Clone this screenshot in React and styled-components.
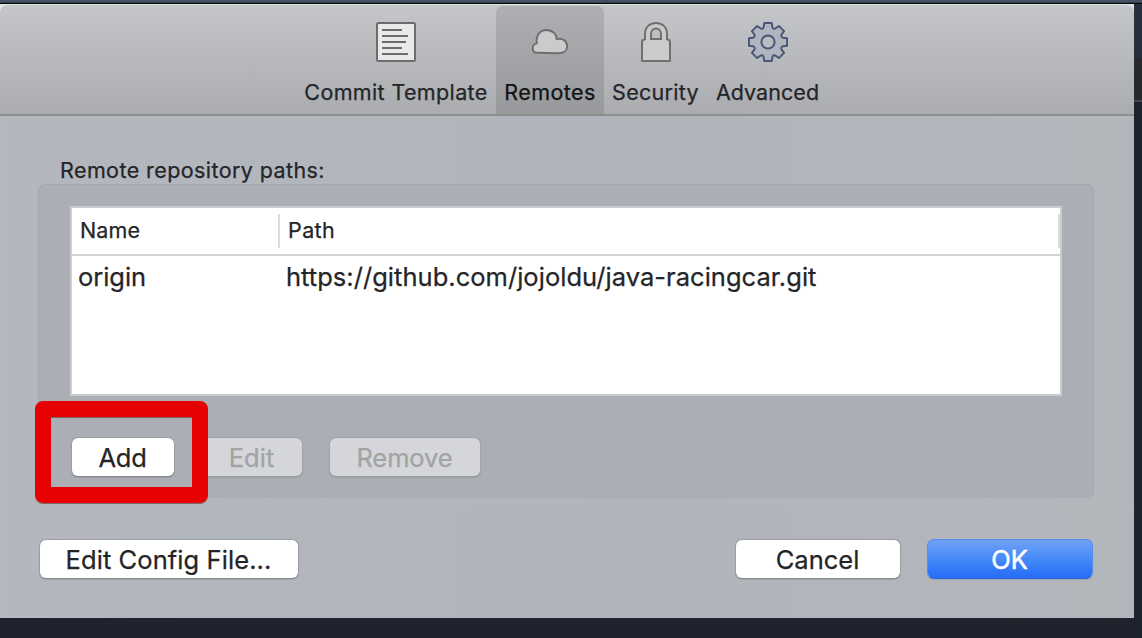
import React from "react";
import styled, { createGlobalStyle, css } from "styled-components";

const Global = createGlobalStyle`
  * { box-sizing: border-box; }
  html, body { margin: 0; padding: 0; }
  body { overflow: hidden; font-family: Inter, "Liberation Sans", sans-serif; color: #242528; }
  button { font-family: inherit; margin: 0; }
`;

const Desktop = styled.div`
  position: relative;
  width: 1142px;
  height: 638px;
  padding-top: 4px;
  background:
    linear-gradient(to bottom, #465263 0 2px, #35404f 2px 3px, #06080b 3px 4px, transparent 4px),
    linear-gradient(to bottom, #27303d 0 58px, #26292d 58px 100px, #44474b 100px 102px, #1c222e 102px) right / 8px 100% no-repeat,
    #1e232e;
`;

const Dialog = styled.main`
  display: flex;
  flex-direction: column;
  width: 1134px;
  height: 614px;
  background:
    linear-gradient(#dfe3e6, #dfe3e6) top / 100% 10px no-repeat,
    linear-gradient(to right, #b4b8be, #b1b5bc 40%, #b3b6bb);
`;

const Toolbar = styled.nav`
  display: flex;
  justify-content: flex-start;
  flex: none;
  height: 112px;
  padding: 1px 0 0 296px;
  border-top: 1px solid #dfe3e6;
  border-bottom: 2px solid #8c8e91;
  border-radius: 8px 8px 0 0;
  background: linear-gradient(to bottom, #c5c6c9, #abacaf);
`;

const Tab = styled.button`
  display: flex;
  flex-direction: column;
  align-items: center;
  flex: none;
  width: ${(p) => p.$width}px;
  height: 108px;
  padding: 16px 0 0;
  border: 0;
  border-radius: 7px 7px 0 0;
  background: ${(p) => (p.$active ? "linear-gradient(to bottom, #aeafb2, #98999b)" : "transparent")};
  color: ${(p) => (p.$active ? "#111216" : "#242529")};

  svg { display: block; flex: none; }
`;

const Label = styled.span`
  display: block;
  white-space: nowrap;
  font-size: ${(p) => p.$size || 21.5}px;
  font-weight: 400;
  line-height: 28px;
  letter-spacing: ${(p) => p.$track || 0}px;
  -webkit-text-stroke: ${(p) => p.$stroke || 0.25}px currentColor;
`;

const TabLabel = styled(Label)`
  margin-top: 16px;
`;

const Content = styled.section`
  display: flex;
  flex-direction: column;
  flex: 1;
  padding: 40px 40px 38px 38px;
`;

const Caption = styled(Label)`
  margin: 0 0 0 22px;
`;

const Group = styled.div`
  display: flex;
  flex-direction: column;
  height: 314px;
  padding: 21px 31px 0;
  border: 1px solid #a4a7ac;
  border-bottom-color: #aaadb2;
  border-radius: 7px;
  background: #abaeb4;
`;

const Table = styled.div`
  height: 190px;
  border: 2px solid #cbccce;
  background: #fff;
`;

const TableHead = styled.div`
  display: grid;
  grid-template-columns: 208px 1fr;
  align-items: center;
  height: 48px;
  border-bottom: 2px solid #d4d4d4;
`;

const HeadCell = styled.div`
  display: flex;
  align-items: center;
  height: 34px;
  padding: 0 0 2px 8px;
  border-right: 2px solid #dcdcdc;
`;

const Row = styled.div`
  display: grid;
  grid-template-columns: 208px 1fr;
  align-items: center;
  height: 42px;
  padding-left: 6px;
`;

const Actions = styled.div`
  display: flex;
  gap: 26px;
  margin: 41px 0 0 1px;
`;

const Footer = styled.footer`
  display: flex;
  gap: 26px;
  margin: 41px 1px 0 1px;
`;

const variants = {
  normal: css`
    background: #fff;
    color: #242425;
    border-color: #999ca2;
    border-bottom-color: #888b91;
  `,
  disabled: css`
    background: #d5d6d9;
    color: #a2a3a5;
    border-color: #a2a4a9;
    border-bottom-color: #989ba0;
  `,
  primary: css`
    background: linear-gradient(to bottom, #73a2f6, #468af7 50%, #246af6);
    background-origin: border-box;
    color: #fff;
    border-color: #528deb;
    border-bottom-color: #2767dc;
  `,
};

const PushButton = styled.button`
  display: flex;
  align-items: center;
  justify-content: center;
  flex: none;
  width: ${(p) => p.$width}px;
  height: 40px;
  padding: 1px 1px 0 0;
  margin-left: ${(p) => p.$left || 0};
  border: 1px solid;
  border-radius: 7px;
  box-shadow: 0 1px 1px rgba(70, 75, 85, 0.18);
  ${(p) => variants[p.$variant || "normal"]}
`;

const Highlight = styled.div`
  position: absolute;
  left: 35px;
  top: 401px;
  width: 173px;
  height: 102px;
  border: 16px solid #e60202;
  border-radius: 8px;
  box-shadow: 0 1px 0 rgba(90, 50, 55, 0.6), inset 0 1px 0 rgba(90, 50, 55, 0.6);
  pointer-events: none;
`;

const TemplateIcon = () => (
  <svg width="40" height="40" viewBox="0 0 40 40">
    <rect x="1" y="1" width="38" height="38" rx="1.5" fill="#e9e9e9" stroke="#6c6c6c" strokeWidth="2" />
    <path d="M6 8h20M6 14h26M6 20h24M6 26h20M6 32h26" stroke="#6c6c6c" strokeWidth="2" />
  </svg>
);

const CloudIcon = () => (
  <svg width="40" height="40" viewBox="0 0 40 40">
    <path
      d="M7.2 30.8C1.4 30.8 1.2 22.4 6.8 21.4C5.6 13 10.2 8 16.4 8C22.6 8 27 12.6 26.6 17.2C32.2 15.4 37.2 19.2 37.2 24C37.2 28.4 33.7 31.2 29 31.2Z"
      fill="#cbcbcb" stroke="#6e6e6e" strokeWidth="1.9" strokeLinejoin="round"
    />
  </svg>
);

const LockIcon = () => (
  <svg width="40" height="40" viewBox="0 0 40 40">
    <path
      fillRule="evenodd"
      d="M6 39V20.5Q6 17.6 9 17.2V12C9 5 13.8 1 20 1S31 5 31 12V17.2Q34 17.6 34 20.5V39ZM15 17V12C15 4.6 25 4.6 25 12V17Z"
      fill="#cbcbcb" stroke="#707070" strokeWidth="2"
    />
  </svg>
);

const polar = (radius, degrees) => {
  const a = (degrees * Math.PI) / 180;
  return `${(20 + radius * Math.sin(a)).toFixed(2)} ${(20 - radius * Math.cos(a)).toFixed(2)}`;
};

const gearPath =
  Array.from({ length: 8 }, (_, i) => {
    const a = i * 45;
    return `${i ? "L" : "M"}${polar(14.6, a - 20)}L${polar(15.6, a - 16)}L${polar(19.4, a - 11)}L${polar(19.4, a + 11)}L${polar(15.6, a + 16)}L${polar(14.6, a + 20)}`;
  }).join("") + "Z";

const GearIcon = () => (
  <svg width="40" height="40" viewBox="0 0 40 40">
    <path d={gearPath} fill="#b0b5c0" stroke="#475675" strokeWidth="1.9" strokeLinejoin="round" />
    <circle cx="20" cy="20" r="6.6" fill="#babbbe" stroke="#475675" strokeWidth="2" />
  </svg>
);

const tabs = [
  { name: "Commit Template", width: 200, track: 0.36, Icon: TemplateIcon },
  { name: "Remotes", width: 108, track: 0.42, Icon: CloudIcon, active: true },
  { name: "Security", width: 103, track: 0.3, Icon: LockIcon },
  { name: "Advanced", width: 121, track: 0.05, Icon: GearIcon },
];

export default function App() {
  return (
    <>
      <Global />
      <Desktop>
        <Dialog>
          <Toolbar>
            {tabs.map(({ name, width, track, Icon, active }) => (
              <Tab key={name} $width={width} $active={active}>
                <Icon />
                <TabLabel $track={track}>{name}</TabLabel>
              </Tab>
            ))}
          </Toolbar>
          <Content>
            <Caption $track={0.41}>Remote repository paths:</Caption>
            <Group>
              <Table>
                <TableHead>
                  <HeadCell><Label $track={0.1}>Name</Label></HeadCell>
                  <HeadCell><Label $track={0.4}>Path</Label></HeadCell>
                </TableHead>
                <Row>
                  <Label $size={25.5} $track={-0.05}>origin</Label>
                  <Label $size={25.5} $track={0.03}>https://github.com/jojoldu/java-racingcar.git</Label>
                </Row>
              </Table>
              <Actions>
                <PushButton $width={104}><Label $size={25.5} $track={-0.2}>Add</Label></PushButton>
                <PushButton $width={102} $variant="disabled"><Label $size={25.5}>Edit</Label></PushButton>
                <PushButton $width={152} $variant="disabled"><Label $size={25.5} $track={-0.1}>Remove</Label></PushButton>
              </Actions>
            </Group>
            <Footer>
              <PushButton $width={260}><Label $size={25.5} $track={0.08}>Edit Config File...</Label></PushButton>
              <PushButton $width={166} $left="auto"><Label $size={25.5}>Cancel</Label></PushButton>
              <PushButton $width={166} $variant="primary"><Label $size={25.5} $stroke={0.5} $track={-0.1}>OK</Label></PushButton>
            </Footer>
          </Content>
        </Dialog>
        <Highlight />
      </Desktop>
    </>
  );
}
